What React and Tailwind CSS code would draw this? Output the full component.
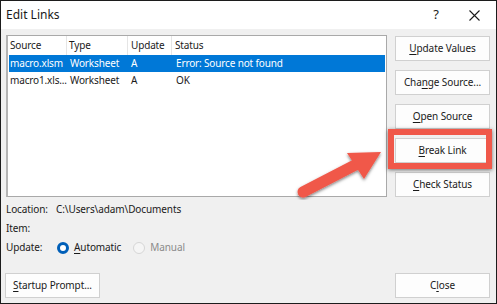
import React from "react";

const font = { fontFamily: '"Noto Sans", "Segoe UI", sans-serif' };

function U({ children }) {
  return <span className="underline underline-offset-2">{children}</span>;
}

function Btn({ children, className = "" }) {
  return (
    <div
      className={
        "h-[25px] w-[95px] flex items-center justify-center bg-[#fdfdfd] border border-[#d0d0d0] text-[10px] tracking-[-0.1px] text-[#1a1a1a] " +
        className
      }
    >
      <span>{children}</span>
    </div>
  );
}

export default function App() {
  return (
    <div
      className="relative w-[497px] h-[304px] border border-[#1c1c1c] bg-[#f0f0f0] flex flex-col overflow-hidden"
      style={font}
    >
      {/* title bar */}
      <div className="h-[28px] bg-white flex items-center justify-between pl-[5px] pr-[16px]">
        <span className="text-[12px] text-[#1a1a1a]">Edit Links</span>
        <div className="flex items-center gap-[30px] text-[#1a1a1a]">
          <span className="text-[13px]">?</span>
          <svg width="11" height="11" viewBox="0 0 11 11">
            <path d="M0.5 0.5 L10.5 10.5 M10.5 0.5 L0.5 10.5" stroke="#1a1a1a" strokeWidth="1.1" />
          </svg>
        </div>
      </div>

      {/* main area */}
      <div className="flex pl-[5px] pt-[6px]">
        <div className="w-[381px] h-[162px] bg-white border border-[#a9a9a9] border-l-[2px] border-l-[#b4b4b4] text-[10px] tracking-[-0.15px] text-[#1a1a1a]">
          <div className="flex h-[19px] items-center">
            <div className="w-[59px] pl-[2px] h-full flex items-center border-r border-[#e5e5e5]">Source</div>
            <div className="w-[61px] pl-[2px] h-full flex items-center border-r border-[#e5e5e5]">Type</div>
            <div className="w-[44px] pl-[3px] h-full flex items-center border-r border-[#e5e5e5]">Update</div>
            <div className="pl-[3px]">Status</div>
          </div>
          <div className="flex h-[17px] items-center bg-[#0078d7] text-white mx-[1px]">
            <div className="w-[58px] pl-[1px] whitespace-nowrap">macro.xlsm</div>
            <div className="w-[61px] pl-[3px]">Worksheet</div>
            <div className="w-[44px] pl-[3px]">A</div>
            <div className="pl-[4px]">Error: Source not found</div>
          </div>
          <div className="flex h-[17px] items-center mx-[1px]">
            <div className="w-[58px] pl-[1px] whitespace-nowrap">macro1.xls...</div>
            <div className="w-[61px] pl-[3px]">Worksheet</div>
            <div className="w-[44px] pl-[3px]">A</div>
            <div className="pl-[4px]">OK</div>
          </div>
        </div>

        <div className="ml-[8px] pt-[1px] flex flex-col gap-[9px]">
          <Btn><U>U</U>pdate Values</Btn>
          <Btn>Cha<U>n</U>ge Source...</Btn>
          <Btn><U>O</U>pen Source</Btn>
          <div className="relative">
            <Btn><U>B</U>reak Link</Btn>
            <div className="absolute left-[-7px] top-[-9px] w-[104px] h-[40px] border-[6px] border-[#f0584a] shadow-[0_1px_4px_rgba(0,0,0,0.55)]" />
          </div>
          <Btn className="border-[#0078d7]"><U>C</U>heck Status</Btn>
        </div>
      </div>

      {/* info */}
      <div className="pl-[5px] mt-[3px] text-[10px] tracking-[-0.1px] text-[#1a1a1a] flex flex-col">
        <div className="h-[19px] flex items-center">
          <span className="w-[50px]">Location:</span>
          <span>C:\Users\adam\Documents</span>
        </div>
        <div className="h-[19px] flex items-center">Item:</div>
        <div className="h-[19px] flex items-center">
          <span className="w-[51px]">Update:</span>
          <span className="w-[12px] h-[12px] rounded-full border-[3.5px] border-[#005fb8] bg-white" />
          <span className="ml-[5px]"><U>A</U>utomatic</span>
          <span className="ml-[12px] w-[12px] h-[12px] rounded-full border border-[#d6d6d6] bg-[#f5f5f5]" />
          <span className="ml-[5px] text-[#8a8a8a]">Manual</span>
        </div>
      </div>

      <div className="mt-auto mb-[5px] flex justify-between pl-[4px] pr-[6px]">
        <Btn><U>S</U>tartup Prompt...</Btn>
        <Btn>C<U>l</U>ose</Btn>
      </div>

      {/* arrow annotation */}
      <svg className="absolute left-0 top-0 pointer-events-none" width="497" height="304" viewBox="0 0 497 304">
        <defs>
          <filter id="sh" x="-20%" y="-20%" width="140%" height="140%">
            <feDropShadow dx="0" dy="1.5" stdDeviation="1.8" floodColor="#000" floodOpacity="0.5" />
          </filter>
        </defs>
        <g filter="url(#sh)" fill="#f0584a">
          <line x1="302" y1="191" x2="358" y2="162" stroke="#f0584a" strokeWidth="11" strokeLinecap="round" />
          <polygon points="380,151 346,152 363,178" />
        </g>
      </svg>
    </div>
  );
}
